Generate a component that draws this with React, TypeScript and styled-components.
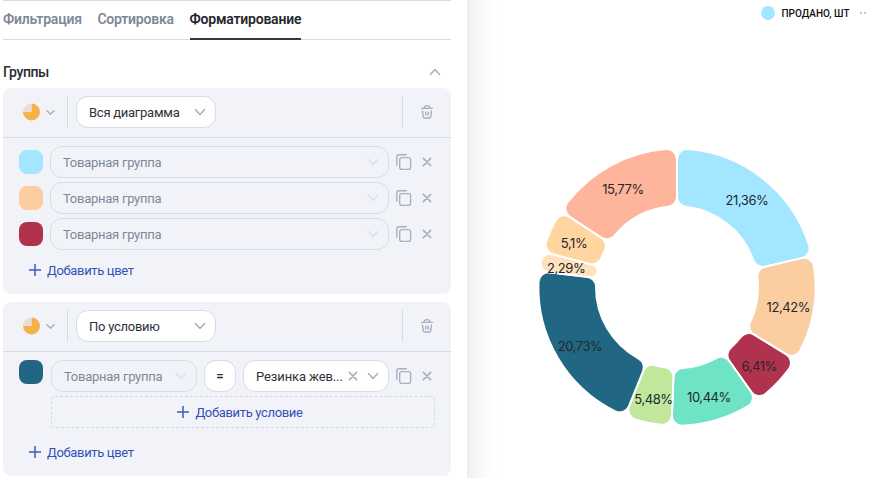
import React from "react";
import styled, { createGlobalStyle } from "styled-components";

const GlobalStyle = createGlobalStyle`
  * { box-sizing: border-box; }
  body {
    margin: 0;
    background: #fff;
    font-family: Roboto, "Noto Sans", sans-serif;
    font-size: 13px;
    color: #2b2b33;
  }
  svg { flex-shrink: 0; }
`;

const Page = styled.main`
  display: flex;
  width: 888px;
  height: 478px;
  overflow: hidden;
`;

const Sidebar = styled.aside`
  flex: 0 0 467px;
  min-width: 0;
  height: 478px;
  padding: 0 16px 0 3px;
`;

const Tabs = styled.nav`
  display: flex;
  gap: 15.7px;
  height: 40px;
  border-top: 1px solid #d5dce5;
  border-bottom: 1px solid #d7dbe4;
`;

const Tab = styled.a<{ $active?: boolean }>`
  height: 39px;
  line-height: 37px;
  font-weight: 600;
  font-size: 14px;
  white-space: nowrap;
  letter-spacing: -0.22px;
  color: ${(p) => (p.$active ? "#26262b" : "#7d8898")};
  box-shadow: ${(p) => (p.$active ? "inset 0 -2px 0 #37363d" : "none")};
`;

const SectionTitle = styled.div`
  display: flex;
  align-items: center;
  justify-content: space-between;
  height: 48px;
  padding: 15px 10px 0 0;
  font-weight: 500;
  font-size: 14px;
  letter-spacing: -0.4px;
`;

const Card = styled.section<{ $height: number }>`
  height: ${(p) => p.$height}px;
  margin-bottom: 8px;
  border-radius: 8px;
  background: #f2f3f8;
`;

const CardHeader = styled.header`
  display: flex;
  align-items: center;
  height: 50px;
  padding: 0 16px 1px 19px;
  border-bottom: 1px solid #d3dbe4;
`;

const ChartType = styled.button`
  display: flex;
  align-items: center;
  gap: 6px;
  width: 45px;
  padding: 0;
  border: 0;
  background: none;
`;

const Divider = styled.i<{ $right?: boolean }>`
  width: 1px;
  height: 32px;
  margin-left: ${(p) => (p.$right ? "auto" : "0")};
  margin-right: ${(p) => (p.$right ? "16px" : "8px")};
  background: #d3dbe4;
`;

const Select = styled.div<{ $width: number; $disabled?: boolean }>`
  display: flex;
  align-items: center;
  gap: 9px;
  flex: 0 0 ${(p) => p.$width}px;
  min-width: 0;
  height: 32px;
  padding: 0 9px 0 12px;
  border: 1px solid #d5dce5;
  border-radius: 12px;
  background: ${(p) => (p.$disabled ? "transparent" : "#fff")};
  color: ${(p) => (p.$disabled ? "#7f8998" : "#303037")};
  white-space: nowrap;
`;

const SelectText = styled.span<{ $spacing?: number }>`
  flex: 1;
  min-width: 0;
  letter-spacing: ${(p) => p.$spacing ?? -0.26}px;
`;

const CardBody = styled.div`
  display: flex;
  flex-direction: column;
  gap: 4px;
  padding: 8px 16px 0;
`;

const Row = styled.div`
  display: flex;
  align-items: center;
  gap: 7px;
  height: 32px;
`;

const Swatch = styled.i<{ $color: string; $top?: boolean }>`
  flex: 0 0 24px;
  height: 24px;
  margin-right: ${(p) => (p.$top ? "1px" : "0")};
  align-self: ${(p) => (p.$top ? "flex-start" : "center")};
  border-radius: 8px;
  background: ${(p) => p.$color};
`;

const Operator = styled.div`
  flex: 0 0 32px;
  height: 32px;
  border: 1px solid #d5dce5;
  border-radius: 12px;
  background: #fff;
  text-align: center;
  line-height: 30px;
  font-weight: 700;
`;

const RowActions = styled.div`
  display: flex;
  align-items: center;
  gap: 10px;
`;

const AddLink = styled.button`
  display: flex;
  align-items: center;
  gap: 6px;
  height: 32px;
  margin: 0 0 0 10px;
  padding: 0;
  border: 0;
  background: none;
  color: #3250b8;
  font: inherit;
  letter-spacing: -0.34px;
`;

const AddCondition = styled(AddLink)`
  justify-content: center;
  width: 384px;
  margin: 0 0 4px 32px;
  padding-right: 6px;
  border: 1px dashed #d3dae3;
  border-radius: 4px;
`;

const ChartArea = styled.section`
  flex: 1;
  height: 478px;
  background: linear-gradient(90deg, #ededed 0, #f4f4f4 7px, #fafafa 16px, #fff 30px) 0 0 / 30px 100% no-repeat;
`;

const Legend = styled.div`
  display: flex;
  align-items: center;
  height: 26px;
  padding-left: 294px;
  font-size: 10px;
  font-weight: 500;
  color: #111;
`;

const LegendDot = styled.i`
  width: 14px;
  height: 14px;
  margin-right: 6.5px;
  border-radius: 50%;
  background: #a3e6ff;
`;

const LegendText = styled.span`
  width: 78px;
`;

const ChartSvg = styled.svg`
  display: block;
`;

const ChartLabel = styled.text`
  font-family: Inter, sans-serif;
  font-size: 13px;
  fill: #25282e;
  text-anchor: middle;
  letter-spacing: -0.45px;
`;

const Chevron = ({ w = 12, color = "#a9afc2", up = false }: { w?: number; color?: string; up?: boolean }) => (
  <svg width={w} height={w} viewBox="0 0 12 12" fill="none" stroke={color} strokeWidth={w < 12 ? 1.9 : 1.5}>
    <path d={up ? "M1.4 8.4 6 3.6 10.6 8.4" : "M1.4 3.6 6 8.4 10.6 3.6"} strokeLinecap="round" strokeLinejoin="round" />
  </svg>
);

const PieIcon = () => (
  <svg width="18" height="18" viewBox="0 0 18 18">
    <path d="M9.5 9V.5A8.5 8.5 0 1 1 1 9Z" fill="#f5b24c" />
    <path d="M9.3 9V.5A8.3 8.3 0 0 0 1 9Z" fill="#f0dcd0" />
  </svg>
);

const TrashIcon = () => (
  <svg width="16" height="16" viewBox="0 0 16 16" fill="none" stroke="#a9afc2" strokeWidth="1.4" strokeLinecap="round">
    <path d="M2.6 4.4h10.8M5 4.2C5.3 2.4 6.3 1.6 8 1.6s2.7.8 3 2.6" />
    <path d="M3.5 7 4.3 12.8Q4.5 14 5.6 14h4.8Q11.5 14 11.7 12.8L12.5 7M6.8 8.2v2.9M9.2 8.2v2.9" />
  </svg>
);

const CopyIcon = () => (
  <svg width="16" height="16" viewBox="0 0 16 16" fill="none" stroke="#a9afc2" strokeWidth="1.4" strokeLinecap="round">
    <rect x="3.7" y="3.6" width="10.9" height="11.8" rx="1.8" />
    <path d="M.8 11.2V3Q.8 .8 3 .8H10.3" />
  </svg>
);

const CloseIcon = () => (
  <svg width="10" height="10" viewBox="0 0 10 10" stroke="#a9afc2" strokeWidth="1.6" strokeLinecap="round">
    <path d="M1.4 1.4 8.6 8.6M8.6 1.4 1.4 8.6" />
  </svg>
);

const PlusIcon = () => (
  <svg width="12" height="12" viewBox="0 0 12 12" stroke="#3f5bbb" strokeWidth="1.5">
    <path d="M6 0v12M0 6h12" />
  </svg>
);

const Actions = () => (
  <RowActions>
    <CopyIcon />
    <CloseIcon />
  </RowActions>
);

const Header = ({ title }: { title: string }) => (
  <CardHeader>
    <ChartType>
      <PieIcon />
      <Chevron w={9} />
    </ChartType>
    <Divider />
    <Select $width={140}>
      <SelectText>{title}</SelectText>
      <Chevron />
    </Select>
    <Divider $right />
    <TrashIcon />
  </CardHeader>
);

type Slice = { value: number; color: string; label: string; x: number; y: number };

const slices: Slice[] = [
  { value: 21.36, color: "#a3e6ff", label: "21,36%", x: 747, y: 200 },
  { value: 12.42, color: "#facea0", label: "12,42%", x: 788.3, y: 307 },
  { value: 6.41, color: "#b1324d", label: "6,41%", x: 759.2, y: 366 },
  { value: 10.44, color: "#6ee3c6", label: "10,44%", x: 709, y: 397 },
  { value: 5.48, color: "#c0e79c", label: "5,48%", x: 653.5, y: 399 },
  { value: 20.73, color: "#216784", label: "20,73%", x: 580, y: 346 },
  { value: 2.29, color: "#ffe1bd", label: "2,29%", x: 566.2, y: 268 },
  { value: 5.1, color: "#ffd5a0", label: "5,1%", x: 574, y: 243 },
  { value: 15.77, color: "#ffb49c", label: "15,77%", x: 623, y: 189 },
];

const CX = 677;
const CY = 287.2;
const OUTER = 138.6;
const INNER = 81;
const CORNER = 10;

const point = (r: number, a: number) => `${(CX + r * Math.sin(a)).toFixed(2)} ${(CY - r * Math.cos(a)).toFixed(2)}`;

function slicePath(a0: number, a1: number) {
  const b = 1 / Math.sin((a1 - a0) / 2);
  const co = Math.min(CORNER, OUTER / (b + 1));
  const ci = Math.min(CORNER, INNER / (b - 1));
  const oa = Math.asin(co / (OUTER - co));
  const ia = Math.asin(ci / (INNER + ci));
  const os = Math.sqrt((OUTER - co) ** 2 - co ** 2);
  const is = Math.sqrt((INNER + ci) ** 2 - ci ** 2);
  return [
    `M${point(is, a0)}L${point(os, a0)}`,
    `A${co} ${co} 0 0 1 ${point(OUTER, a0 + oa)}`,
    `A${OUTER} ${OUTER} 0 0 1 ${point(OUTER, a1 - oa)}`,
    `A${co} ${co} 0 0 1 ${point(os, a1)}L${point(is, a1)}`,
    `A${ci} ${ci} 0 0 1 ${point(INNER, a1 - ia)}`,
    `A${INNER} ${INNER} 0 0 0 ${point(INNER, a0 + ia)}`,
    `A${ci} ${ci} 0 0 1 ${point(is, a0)}Z`,
  ].join("");
}

const Donut = () => {
  let total = 0;
  return (
    <ChartSvg width="421" height="452" viewBox="467 26 421 452">
      {slices.map((s) => {
        const start = total;
        total += s.value;
        return (
          <path
            key={s.label}
            d={slicePath((start * Math.PI) / 50, (total * Math.PI) / 50)}
            fill={s.color}
            stroke="#fff"
            strokeWidth="2"
          />
        );
      })}
      {slices.map((s) => (
        <ChartLabel key={s.label} x={s.x} y={s.y + 4.5}>
          {s.label}
        </ChartLabel>
      ))}
    </ChartSvg>
  );
};

const colors = ["#a3e6ff", "#facea0", "#b1324d"];

export default function App() {
  return (
    <>
      <GlobalStyle />
      <Page>
        <Sidebar>
          <Tabs>
            <Tab>Фильтрация</Tab>
            <Tab>Сортировка</Tab>
            <Tab $active>Форматирование</Tab>
          </Tabs>
          <SectionTitle>
            Группы
            <Chevron up />
          </SectionTitle>
          <Card $height={206}>
            <Header title="Вся диаграмма" />
            <CardBody>
              {colors.map((c) => (
                <Row key={c}>
                  <Swatch $color={c} />
                  <Select $width={339} $disabled>
                    <SelectText>Товарная группа</SelectText>
                    <Chevron color="#dce0eb" />
                  </Select>
                  <Actions />
                </Row>
              ))}
              <AddLink>
                <PlusIcon />
                Добавить цвет
              </AddLink>
            </CardBody>
          </Card>
          <Card $height={174}>
            <Header title="По условию" />
            <CardBody>
              <Row>
                <Swatch $color="#216784" $top />
                <Select $width={146} $disabled>
                  <SelectText>Товарная группа</SelectText>
                  <Chevron color="#dce0eb" />
                </Select>
                <Operator>=</Operator>
                <Select $width={146}>
                  <SelectText $spacing={-0.12}>Резинка жев...</SelectText>
                  <CloseIcon />
                  <Chevron />
                </Select>
                <Actions />
              </Row>
              <AddCondition>
                <PlusIcon />
                Добавить условие
              </AddCondition>
              <AddLink>
                <PlusIcon />
                Добавить цвет
              </AddLink>
            </CardBody>
          </Card>
        </Sidebar>
        <ChartArea>
          <Legend>
            <LegendDot />
            <LegendText>ПРОДАНО, ШТ</LegendText>
            <svg width="7" height="2" viewBox="0 0 7 2" fill="#c3c6d2">
              <path d="M0 0h2v2H0zM4 0h2v2H4z" />
            </svg>
          </Legend>
          <Donut />
        </ChartArea>
      </Page>
    </>
  );
}
